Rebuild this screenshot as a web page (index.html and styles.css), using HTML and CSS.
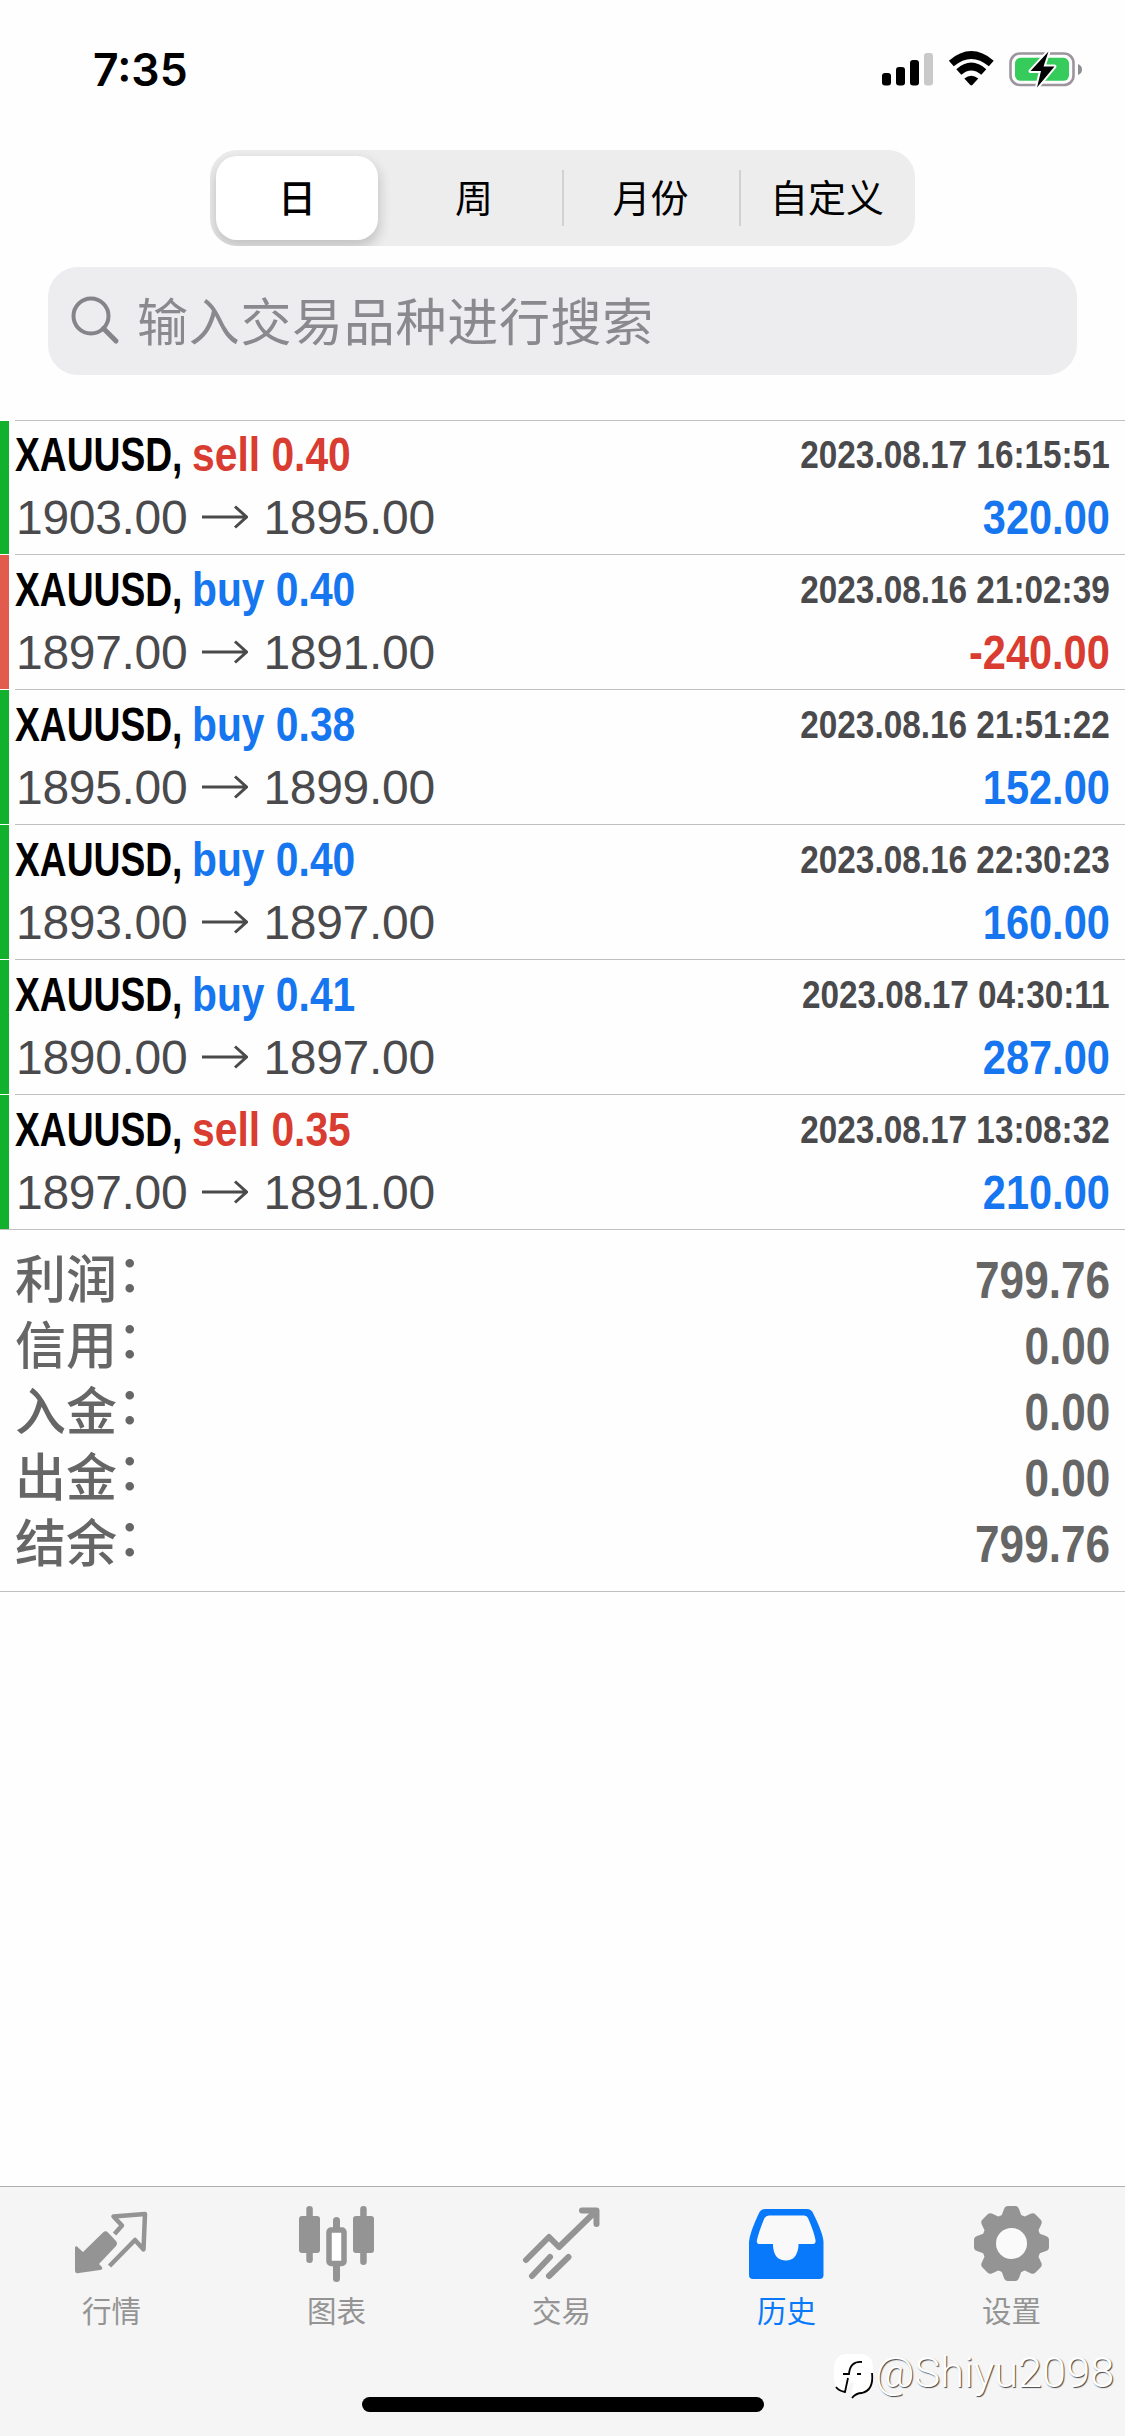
FILE: index.html
```
<!DOCTYPE html>
<html lang="zh-CN">
<head>
<meta charset="utf-8">
<title>历史</title>
<link rel="stylesheet" href="styles.css">
</head>
<body>
<div class="screen">
  <header class="status">
    <span class="time">7:35</span>
    <svg class="status-icons" width="204" height="44" viewBox="0 0 204 44">
      <g fill="#000"><rect x="2" y="25" width="9" height="12.500" rx="3"/><rect x="16" y="19" width="9" height="18.500" rx="3"/><rect x="30" y="12" width="9" height="25.500" rx="3"/></g>
      <rect x="44" y="5" width="9" height="32.500" rx="3" fill="#c9c9c9"/>
      <g transform="translate(-1.700 -0.500)"><g fill="none" stroke="#000" stroke-width="7.500"><path d="M73 16Q93 -1 113 16"/><path d="M80.500 24.500Q93 13.500 105.500 24.500"/></g>
      <path d="M86 31Q93 25.500 100 31L94 37.500Q93 38.300 92 37.500Z"/></g>
      <rect x="130.500" y="5.500" width="63" height="31.500" rx="9.500" fill="none" stroke="#9c959c" stroke-width="2.600"/>
      <path d="M198 16q4 1.500 4 5.500t-4 5.500Z" fill="#8e8e8e"/>
      <rect x="135" y="9.800" width="54" height="23" rx="5.500" fill="#35cc5b"/>
      <path d="M168.500 3.500L150.500 23H161L157 39.500L174.500 18.500H163.500Z" fill="#000" stroke="#fff" stroke-width="4" paint-order="stroke" stroke-linejoin="round"/>
    </svg>
  </header>

  <nav class="segments">
    <span class="segment selected">日</span>
    <span class="segment second">周</span>
    <span class="segment ruled">月份</span>
    <span class="segment ruled">自定义</span>
  </nav>

  <div class="search">
    <svg width="50" height="50" viewBox="0 0 50 50" fill="none" stroke="#858589" stroke-width="4"><circle cx="20" cy="20" r="17.500"/><path d="M32.500 32.500L45 45" stroke-width="5" stroke-linecap="round"/></svg>
    <span>输入交易品种进行搜索</span>
  </div>

  <main class="history">
    <article class="deal gain">
      <div class="line"><span class="symbol">XAUUSD,</span><span class="side sell">sell 0.40</span><span class="date">2023.08.17 16:15:51</span></div>
      <div class="line prices"><span class="price">1903.00</span><svg class="arrow" viewBox="0 0 46 24"><path d="M0 12H44M33 1.500L44.500 12L33 22.500"/></svg><span class="price">1895.00</span><span class="profit">320.00</span></div>
    </article>
    <article class="deal loss">
      <div class="line"><span class="symbol">XAUUSD,</span><span class="side buy">buy 0.40</span><span class="date">2023.08.16 21:02:39</span></div>
      <div class="line prices"><span class="price">1897.00</span><svg class="arrow" viewBox="0 0 46 24"><path d="M0 12H44M33 1.500L44.500 12L33 22.500"/></svg><span class="price">1891.00</span><span class="profit">-240.00</span></div>
    </article>
    <article class="deal gain">
      <div class="line"><span class="symbol">XAUUSD,</span><span class="side buy">buy 0.38</span><span class="date">2023.08.16 21:51:22</span></div>
      <div class="line prices"><span class="price">1895.00</span><svg class="arrow" viewBox="0 0 46 24"><path d="M0 12H44M33 1.500L44.500 12L33 22.500"/></svg><span class="price">1899.00</span><span class="profit">152.00</span></div>
    </article>
    <article class="deal gain">
      <div class="line"><span class="symbol">XAUUSD,</span><span class="side buy">buy 0.40</span><span class="date">2023.08.16 22:30:23</span></div>
      <div class="line prices"><span class="price">1893.00</span><svg class="arrow" viewBox="0 0 46 24"><path d="M0 12H44M33 1.500L44.500 12L33 22.500"/></svg><span class="price">1897.00</span><span class="profit">160.00</span></div>
    </article>
    <article class="deal gain">
      <div class="line"><span class="symbol">XAUUSD,</span><span class="side buy">buy 0.41</span><span class="date">2023.08.17 04:30:11</span></div>
      <div class="line prices"><span class="price">1890.00</span><svg class="arrow" viewBox="0 0 46 24"><path d="M0 12H44M33 1.500L44.500 12L33 22.500"/></svg><span class="price">1897.00</span><span class="profit">287.00</span></div>
    </article>
    <article class="deal gain">
      <div class="line"><span class="symbol">XAUUSD,</span><span class="side sell">sell 0.35</span><span class="date">2023.08.17 13:08:32</span></div>
      <div class="line prices"><span class="price">1897.00</span><svg class="arrow" viewBox="0 0 46 24"><path d="M0 12H44M33 1.500L44.500 12L33 22.500"/></svg><span class="price">1891.00</span><span class="profit">210.00</span></div>
    </article>
    <section class="summary">
      <div class="total"><span class="label">利润<span class="colon">：</span></span><span class="amount">799.76</span></div>
      <div class="total"><span class="label">信用<span class="colon">：</span></span><span class="amount">0.00</span></div>
      <div class="total"><span class="label">入金<span class="colon">：</span></span><span class="amount">0.00</span></div>
      <div class="total"><span class="label">出金<span class="colon">：</span></span><span class="amount">0.00</span></div>
      <div class="total"><span class="label">结余<span class="colon">：</span></span><span class="amount">799.76</span></div>
    </section>
  </main>

  <footer class="tabs">
    <div class="tab">
      <svg viewBox="0 0 80 80"><path d="M31 26.500Q33.500 24 36 26.500L44 35Q46 37.500 44 40L27 58L30 61Q31 63.500 28 64L7 67Q3 68 3 64V41.500Q4 39 6 41.500L11 46Z" fill="#949494"/><path d="M42.500 28L50 19.500L41.500 10.500L73 8L71.500 43.500L63 34L37.500 60" fill="none" stroke="#949494" stroke-width="4.500" stroke-linejoin="round"/></svg>
      <span>行情</span>
    </div>
    <div class="tab">
      <svg viewBox="0 0 80 80" fill="#949494"><rect x="2" y="10" width="21" height="37" rx="3"/><rect x="9.300" y="0" width="6.500" height="57" rx="3.200"/><rect x="56" y="10" width="21" height="37" rx="3"/><rect x="63.200" y="0" width="6.500" height="59" rx="3.200"/><rect x="36" y="11" width="7" height="65" rx="3.500"/><rect x="32" y="24" width="15" height="33.500" rx="2" fill="#fff" stroke="#949494" stroke-width="5.500"/></svg>
      <span>图表</span>
    </div>
    <div class="tab">
      <svg viewBox="0 0 80 80" fill="none" stroke="#949494" stroke-width="6" stroke-linecap="round" stroke-linejoin="round"><path d="M4 54L27 31L37 41L74 5M60 4.500H74.500V18M10 70L28 51M27 70L46.500 51"/></svg>
      <span>交易</span>
    </div>
    <div class="tab active">
      <svg viewBox="0 0 80 80"><path d="M18 3H60Q64 3 66 7Q76 27 76.500 36V69Q76.500 73 72.500 73H6Q2 73 2 69V36Q2.500 27 12 7Q14 3 18 3Z" fill="#0879fa"/><path d="M22 9.500H57Q60 9.500 61 12Q67 26 68.500 34Q69 38 66 38H51.500V40Q50 54.500 39 54.500Q27 54.500 26 40V38H13Q9 38 10 34Q12 25 17.500 12Q19 9.500 22 9.500Z" fill="#f9f9f9"/></svg>
      <span>历史</span>
    </div>
    <div class="tab">
      <svg viewBox="0 0 80 80"><g fill="#949494"><circle cx="39.500" cy="37.500" r="30"/><path d="M28 14L32 3Q33 0 36 0H43Q46 0 47 3L51 14V61L47 72Q46 75 43 75H36Q33 75 32 72L28 61Z"/><path d="M28 14L32 3Q33 0 36 0H43Q46 0 47 3L51 14V61L47 72Q46 75 43 75H36Q33 75 32 72L28 61Z" transform="rotate(45 39.500 37.500)"/><path d="M28 14L32 3Q33 0 36 0H43Q46 0 47 3L51 14V61L47 72Q46 75 43 75H36Q33 75 32 72L28 61Z" transform="rotate(90 39.500 37.500)"/><path d="M28 14L32 3Q33 0 36 0H43Q46 0 47 3L51 14V61L47 72Q46 75 43 75H36Q33 75 32 72L28 61Z" transform="rotate(135 39.500 37.500)"/></g><circle cx="39.500" cy="37.500" r="15.500" fill="#fafafa"/></svg>
      <span>设置</span>
    </div>
    <div class="home-indicator"></div>
    <div class="watermark">
      <svg width="42" height="50" viewBox="0 0 42 50"><path d="M12 1H28Q40 2 40 15V26Q40 38 28 40Q24 40 20 45L19 38L21 30L18 30L12 39Q2 37 1 27V14Q1 3 12 1Z" fill="#fff"/><path d="M10 21H16Q17 8 29 9M24 21H28M15 25L12 39Q6 38 3 34M39 20Q41 37 29 40Q23 40 19 45" fill="none" stroke="#000" stroke-width="1.800"/></svg>
      <span>@Shiyu2098</span>
    </div>
  </footer>
</div>
</body>
</html>
```
FILE: styles.css
```
* { box-sizing: border-box; }

body {
  margin: 0;
  background: #fefefe;
  color: #000;
  font-family: "Liberation Sans", "Noto Sans CJK SC", sans-serif;
}

.screen {
  display: flex;
  flex-direction: column;
  width: 1125px;
  height: 2436px;
  overflow: hidden;
}

.status {
  display: flex;
  justify-content: space-between;
  height: 150px;
  padding: 48px 41px 0 93px;
}

.time {
  font: 600 44.5px/44px Inter, sans-serif;
}

.segments {
  display: grid;
  grid-template-columns: 168px 184px 177px 176px;
  align-self: center;
  width: 705px;
  height: 96px;
  border-radius: 27px;
  background: #ededed;
  overflow: hidden;
  font-family: "Noto Sans CJK SC", sans-serif;
  font-size: 38px;
}

.segment {
  display: flex;
  align-items: center;
  justify-content: center;
  padding-bottom: 6px;
}

.second { padding-left: 8px; }

.selected {
  margin: 6px 0 6px 6px;
  border-radius: 21px;
  background: #fff;
  box-shadow: 0 6px 12px 2px rgba(0, 0, 0, 0.17);
  font-weight: 500;
}

.ruled { position: relative; }

.ruled::before {
  content: "";
  position: absolute;
  left: 0;
  top: 20px;
  width: 2px;
  height: 56px;
  background: #d2d2d4;
}

.search {
  display: flex;
  align-items: center;
  gap: 16px;
  width: 1029px;
  height: 108px;
  margin: 21px 48px 0;
  padding-left: 23px;
  border-radius: 30px;
  background: #ededef;
  color: #8a8a8e;
  font: 51px/108px "Noto Sans CJK SC", sans-serif;
  letter-spacing: 0.7px;
}

.search span {
  padding-bottom: 4px;
  line-height: 100px;
}

.history { margin-top: 45px; }

.deal {
  height: 135px;
  padding: 8px 15px 0 16px;
  background: linear-gradient(#c0c0c2, #c0c0c2) 15px 0 / 100% 1px no-repeat,
    linear-gradient(var(--mark), var(--mark)) 0 1px / 9px 134px no-repeat;
}

.deal:first-child {
  height: 134px;
  padding-top: 7px;
}

.gain { --mark: #11b02d; --result: #1676f0; }
.loss { --mark: #e25c4d; --result: #d93c30; }

.line {
  display: flex;
  align-items: baseline;
  height: 63px;
  font-size: 48px;
  line-height: 56px;
  white-space: nowrap;
}

.symbol {
  width: 177px;
  margin-left: -1px;
  font-weight: bold;
  transform: scaleX(0.775);
  transform-origin: left;
}

.side {
  font-weight: bold;
  transform: scaleX(0.85);
  transform-origin: left;
}

.sell { color: #d93c30; }
.buy { color: #1676f0; }

.date {
  align-self: flex-start;
  margin-left: auto;
  color: #4a4a4d;
  font-size: 39.5px;
  line-height: 54px;
  font-weight: bold;
  transform: scaleX(0.844);
  transform-origin: right;
}

.prices { color: #4a4a4d; }

.price { letter-spacing: -0.3px; }

.arrow {
  align-self: flex-start;
  width: 46px;
  height: 24px;
  margin: 15px 15px 0;
  fill: none;
  stroke: #4a4a4d;
  stroke-width: 3;
}

.profit {
  margin-left: auto;
  color: var(--result);
  font-weight: bold;
  transform: scaleX(0.865);
  transform-origin: right;
}

.summary {
  height: 363px;
  padding: 13px 15px 0;
  border-top: 1px solid #c0c0c2;
  border-bottom: 1px solid #c0c0c2;
  color: #666;
  font-size: 51px;
  line-height: 66px;
}

.total {
  display: flex;
  align-items: baseline;
  justify-content: space-between;
  height: 66px;
}

.label {
  font-family: "Noto Sans CJK SC", sans-serif;
  font-weight: 500;
}

.colon {
  position: relative;
  top: -6px;
}

.amount {
  font-weight: bold;
  transform: scaleX(0.865);
  transform-origin: right;
}

.tabs {
  position: relative;
  display: grid;
  grid-template-columns: repeat(5, 225px);
  height: 250px;
  margin-top: auto;
  border-top: 1px solid #aeaeae;
  background: #f5f5f5;
}

.tab {
  display: flex;
  flex-direction: column;
  align-items: center;
  padding: 19px 2px 0 0;
  color: #949494;
  font: 29.5px/44px "Noto Sans CJK SC", sans-serif;
}

.tab svg {
  width: 80px;
  height: 80px;
  margin-bottom: 1px;
}

.active { color: #0879fa; }

.home-indicator {
  position: absolute;
  left: 362px;
  top: 210px;
  width: 402px;
  height: 15px;
  border-radius: 8px;
  background: #000;
}

.watermark {
  position: absolute;
  left: 833px;
  top: 166px;
  display: flex;
  color: #fff;
  font: 300 43.3px/40px Roboto, sans-serif;
  text-shadow: 1px 1px 1px #444;
}
```
